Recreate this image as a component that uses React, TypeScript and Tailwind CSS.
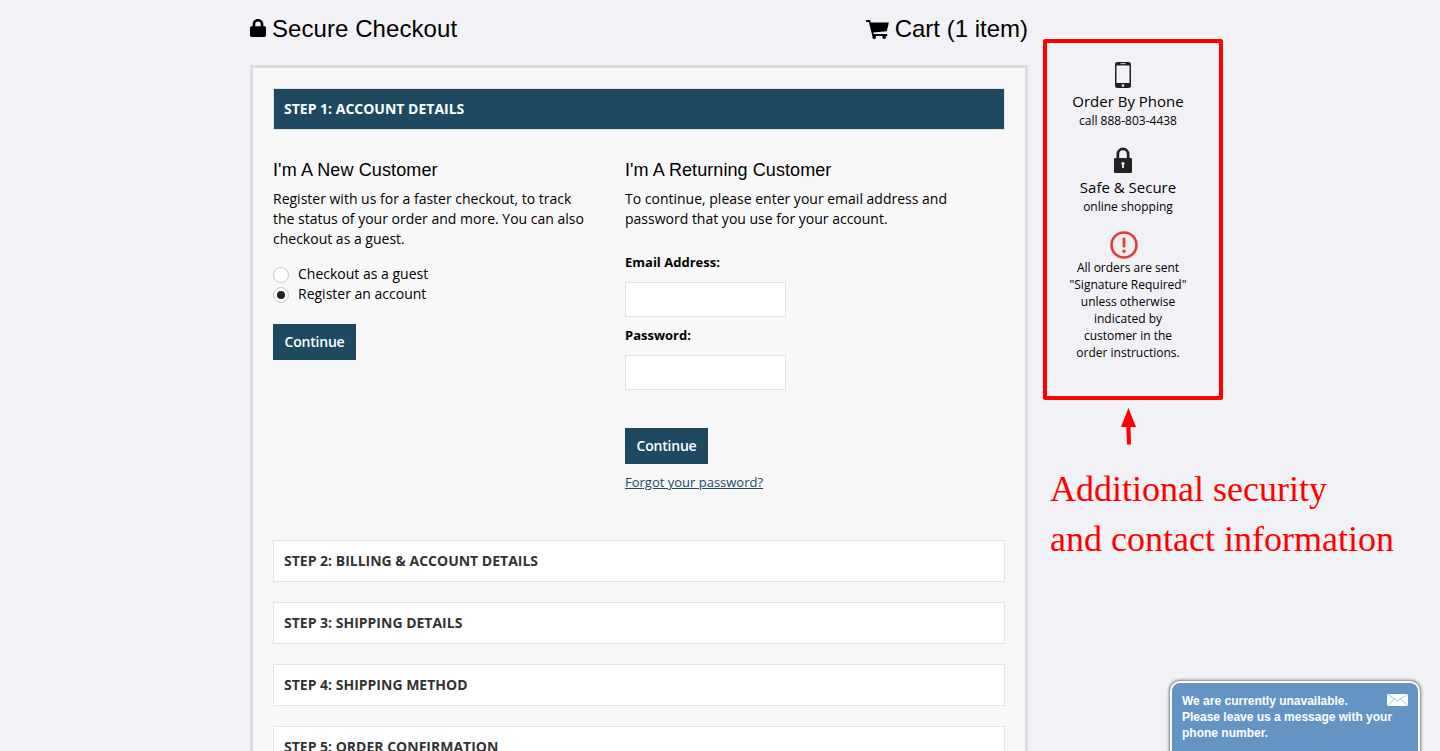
const steps = [
  { label: "STEP 2: BILLING & ACCOUNT DETAILS" },
  { label: "STEP 3: SHIPPING DETAILS" },
  { label: "STEP 4: SHIPPING METHOD" },
  { label: "STEP 5: ORDER CONFIRMATION" },
];

const LockIcon = ({ className }: { className: string }) => (
  <svg viewBox="0 0 16 18" className={className} fill="currentColor">
    <path d="M2.6 7.2V5.2C2.6 2.3 5 0 8 0s5.4 2.3 5.4 5.2v2h.9c.9 0 1.7.7 1.7 1.6v7.5c0 .9-.8 1.7-1.7 1.7H1.7C.8 18 0 17.2 0 16.300V8.800C0 7.900.8 7.200 1.700 7.200h.9zM5.300 7.200h5.400V5.200C10.700 3.700 9.500 2.600 8 2.600S5.300 3.700 5.300 5.200v2z" />
  </svg>
);

const CartIcon = () => (
  <svg viewBox="0 0 24 20" className="w-[23px] h-[19px] text-black" fill="currentColor">
    <path d="M0 0h4.300l.7 2.500h19l-2.300 9.300-14.200 1.300.4 1.700h14.300v2H6.600L2.900 2H0z" />
    <circle cx="8.500" cy="18" r="2" />
    <circle cx="19" cy="18" r="2" />
  </svg>
);

const PhoneIcon = () => (
  <svg viewBox="0 0 16 26" className="w-[16px] h-[26px] text-[#222]">
    <rect width="16" height="26" rx="2.500" fill="currentColor" />
    <rect x="1.500" y="3.500" width="13" height="17.500" fill="#f2f1f5" />
    <circle cx="8" cy="23.500" r="1.300" fill="#f2f1f5" />
    <rect x="5.500" y="1.300" width="5" height="0.800" fill="#f2f1f5" />
  </svg>
);

const SafeLockIcon = () => (
  <svg viewBox="0 0 18 26" className="w-[18px] h-[26px] text-[#222]">
    <path fill="currentColor" d="M2.500 11V7a6.500 6.500 0 0 1 13 0v4h1.200c.7 0 1.300.6 1.300 1.300v12.400c0 .7-.6 1.300-1.300 1.300H1.300C.6 26 0 25.400 0 24.700V12.300C0 11.600.6 11 1.300 11zm2.700 0h7.600V7a3.800 3.800 0 0 0-7.600 0z" />
    <path fill="#f2f1f5" d="M9 15a1.700 1.700 0 0 1 .9 3.100V21H8.100v-2.900A1.700 1.700 0 0 1 9 15z" />
  </svg>
);

const AlertIcon = () => (
  <svg viewBox="0 0 28 28" className="w-[28px] h-[28px]">
    <circle cx="14" cy="14" r="12.500" fill="#f6eeee" stroke="#d9403f" strokeWidth="2.600" />
    <rect x="12.600" y="6.500" width="2.800" height="10" rx="1.200" fill="#d9403f" />
    <circle cx="14" cy="20.200" r="1.700" fill="#d9403f" />
  </svg>
);

const ContinueButton = () => (
  <button className="w-[83px] h-[36px] pb-[2px] bg-[#1e4960] text-white text-[14px] font-semibold tracking-[-0.2px]">Continue</button>
);

const Radio = ({ checked, label }: { checked?: boolean; label: string }) => (
  <label className="flex items-center h-[20px] text-[14px] text-black">
    <span className="w-[16px] h-[16px] mt-[4px] mr-[9px] rounded-full bg-white border border-[#c9c9c9] flex items-center justify-center">
      {checked && <span className="w-[8px] h-[8px] rounded-full bg-[#222]" />}
    </span>
    {label}
  </label>
);

const App = () => {
  return (
    <div className="relative h-[751px] overflow-hidden bg-[#f2f1f5] font-['Open_Sans',sans-serif]">
      <div className="flex pl-[250px]">
        <main className="w-[778px] shrink-0">
          <header className="flex justify-between items-center h-[65px] pb-[7px] font-['Liberation_Sans',sans-serif] text-[24px] text-black">
            <div className="flex items-center tracking-[0.07px]">
              <LockIcon className="w-[16px] h-[18px] mr-[6px] mb-[3px] text-black" />
              Secure Checkout
            </div>
            <div className="flex items-center">
              <CartIcon />
              <span className="ml-[6px]">Cart (1 item)</span>
            </div>
          </header>

          <div className="border-[3px] border-[#dcdcdc] bg-[#f8f8f8] px-[20px] pt-[20px]">
            <h2 className="h-[42px] pb-[2px] flex items-center px-[10px] bg-[#1e4960] border border-[#e4e4e4] text-white text-[14px] font-bold">
              STEP 1: ACCOUNT DETAILS
            </h2>

            <div className="flex h-[410px] pt-[29px]">
              <section className="w-[352px] pr-[30px]">
                <h3 className="font-['Liberation_Sans',sans-serif] text-[18px] leading-[22px] tracking-[0.12px] text-black">I'm A New Customer</h3>
                <p className="mt-[8px] text-[14px] leading-[20px] text-black">
                  Register with us for a faster checkout, to track the status of your order and more. You can also checkout as a guest.
                </p>
                <div className="mt-[14px]">
                  <Radio label="Checkout as a guest" />
                  <Radio checked label="Register an account" />
                </div>
                <div className="mt-[21px]">
                  <ContinueButton />
                </div>
              </section>

              <section className="flex-1">
                <h3 className="font-['Liberation_Sans',sans-serif] text-[18px] leading-[22px] tracking-[0.08px] text-black">I'm A Returning Customer</h3>
                <p className="mt-[8px] w-[340px] text-[14px] leading-[20px] text-black">
                  To continue, please enter your email address and password that you use for your account.
                </p>
                <label className="block mt-[23px] text-[13px] leading-[20px] font-bold text-black">Email Address:</label>
                <input className="block mt-[10px] w-[161px] h-[35px] bg-white border border-[#e2e2e2]" />
                <label className="block mt-[8px] text-[13px] leading-[20px] font-bold text-black">Password:</label>
                <input className="block mt-[10px] w-[161px] h-[35px] bg-white border border-[#e2e2e2]" type="password" />
                <div className="mt-[38px]">
                  <ContinueButton />
                </div>
                <a className="block mt-[8px] text-[13px] leading-[20px] text-[#1e4960] underline">Forgot your password?</a>
              </section>
            </div>

            <div className="flex flex-col gap-[20px]">
              {steps.map((step) => (
                <div key={step.label} className="h-[42px] pb-[2px] shrink-0 flex items-center px-[10px] bg-white border border-[#e4e4e4] text-[#333] text-[14px] font-bold">
                  {step.label}
                </div>
              ))}
            </div>
          </div>
        </main>

        <aside className="ml-[15px] mt-[39px] w-[180px] shrink-0">
          <div className="h-[361px] rounded-[2px] border-[4px] border-[#ff0000] pt-[19px] pr-[10px] flex flex-col items-center text-center text-black">
            <div className="mr-[10px]"><PhoneIcon /></div>
            <div className="mt-[3px] text-[15px] leading-[20px]">Order By Phone</div>
            <div className="mt-[1px] text-[12px] leading-[18px]">call 888-803-4438</div>
            <div className="mt-[17px] mr-[10px]"><SafeLockIcon /></div>
            <div className="mt-[4px] text-[15px] leading-[20px]">Safe &amp; Secure</div>
            <div className="mt-[1px] text-[12px] leading-[18px]">online shopping</div>
            <div className="mt-[15px] mr-[8px]"><AlertIcon /></div>
            <div className="text-[12px] leading-[17px]">
              All orders are sent<br />"Signature Required"<br />unless otherwise<br />indicated by<br />customer in the<br />order instructions.
            </div>
          </div>
          <svg viewBox="0 0 18 38" className="ml-[77px] mt-[8px] w-[18px] h-[38px] text-[#ff0000]" fill="currentColor">
            <path d="M8.500 0l7.500 19h-5.500L11 36.500H7L6.300 19H1z" />
          </svg>
          <div className="ml-[7px] mt-[18px] w-[380px] font-['Liberation_Serif',serif] text-[36px] leading-[50px] text-[#ff0000]">
            Additional security<br />and contact information
          </div>
        </aside>
      </div>

      <div className="absolute left-[1170px] top-[681px] w-[250px] h-[80px] rounded-t-[10px] bg-[#6494c4] border-2 border-white shadow-[0_0_3px_1px_#777] px-[10px] pt-[10px] font-['Liberation_Sans',sans-serif] text-[12px] leading-[16px] font-bold text-white">
        <svg viewBox="0 0 21 12" className="absolute right-[10px] top-[11px] w-[21px] h-[12px]">
          <rect width="21" height="12" fill="#fff" />
          <path d="M0 0l10.500 7L21 0M0 12l7.500-7M21 12l-7.500-7" fill="none" stroke="#8fb0d3" strokeWidth="0.800" />
        </svg>
        We are currently unavailable.<br />Please leave us a message with your<br />phone number.
      </div>
    </div>
  );
};

export default App;
